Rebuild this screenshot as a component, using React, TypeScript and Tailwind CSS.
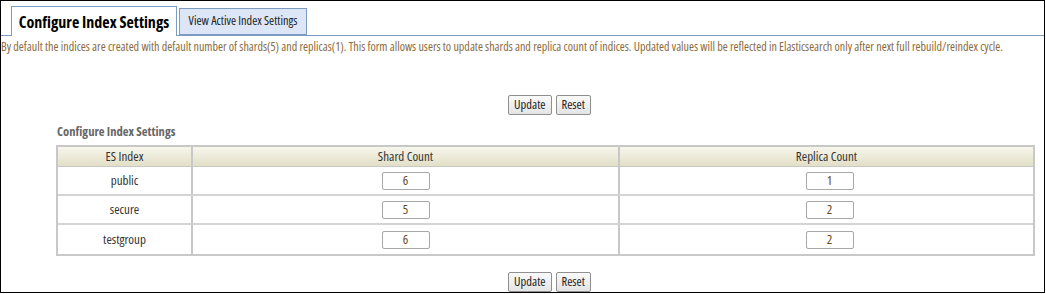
const rows = [
  { name: "public", shard: "6", replica: "1" },
  { name: "secure", shard: "5", replica: "2" },
  { name: "testgroup", shard: "6", replica: "2" },
];

function Buttons() {
  return (
    <div className="flex justify-center gap-[4px] pl-[54px]">
      <button className="h-[20px] px-[5px] border border-[#8f8f8f] rounded-[2px] bg-gradient-to-b from-[#fafafa] to-[#e4e4e4] text-[12.5px] text-[#222] leading-none">Update</button>
      <button className="h-[20px] px-[5px] border border-[#8f8f8f] rounded-[2px] bg-gradient-to-b from-[#fafafa] to-[#e4e4e4] text-[12.5px] text-[#222] leading-none">Reset</button>
    </div>
  );
}

function Cell({ value }: { value: string }) {
  return (
    <div className="flex items-center justify-center">
      <input
        defaultValue={value}
        className="w-[48px] h-[18px] border border-[#a8a8a8] rounded-[2px] text-center text-[13px] text-[#6b4a1e] bg-white outline-none"
      />
    </div>
  );
}

export default function App() {
  return (
    <div className="w-[1046px] h-[294px] bg-white font-['Open_Sans',sans-serif] [font-stretch:75%]">
      <div className="w-[1045px] h-[293px] border border-black flex flex-col">
        <div className="flex items-end pl-[10px] pt-[5px] border-b border-[#7d9ac2]">
          <div className="w-[166px] h-[30px] -mb-px bg-white border border-b-0 border-[#7d9ac2] flex items-center justify-center text-[16px] font-bold text-black">
            Configure Index Settings
          </div>
          <div className="ml-[2px] w-[128px] h-[27px] bg-[#dce6f6] border border-[#7d9ac2] flex items-center justify-center text-[12.3px] text-[#222]">
            View Active Index Settings
          </div>
        </div>
        <div className="pt-[3px] text-[12.07px] leading-[16px] text-[#8a6a3c] whitespace-nowrap">
          By default the indices are created with default number of shards(5) and replicas(1). This form allows users to update shards and replica count of indices. Updated values will be reflected in Elasticsearch only after next full rebuild/reindex cycle.
        </div>
        <div className="mt-[40px]">
          <Buttons />
        </div>
        <div className="mt-[9px] pl-[56px] text-[12.6px] font-bold text-[#666] leading-[16px]">Configure Index Settings</div>
        <div className="mt-[5px] ml-[55px] w-[979px] border-2 border-[#c8c8c8] text-[13px] text-[#333]">
          <div className="grid grid-cols-[135px_427px_1fr] h-[20px] bg-gradient-to-b from-[#f7f6ec] to-[#e2dfc6] border-b border-[#c8c8c8]">
            <div className="flex items-center justify-center border-r-2 border-[#c8c8c8]">ES Index</div>
            <div className="flex items-center justify-center border-r-2 border-[#c8c8c8]">Shard Count</div>
            <div className="flex items-center justify-center">Replica Count</div>
          </div>
          {rows.map((r, i) => (
            <div
              key={r.name}
              className={`grid grid-cols-[135px_427px_1fr] h-[29px] ${i < rows.length - 1 ? "border-b-2 border-[#d4d4d4]" : ""}`}
            >
              <div className="flex items-center justify-center border-r-2 border-[#c8c8c8]">{r.name}</div>
              <div className="border-r-2 border-[#c8c8c8] flex items-center justify-center">
                <Cell value={r.shard} />
              </div>
              <div className="flex items-center justify-center pl-[6px]">
                <Cell value={r.replica} />
              </div>
            </div>
          ))}
        </div>
        <div className="mt-[16px]">
          <Buttons />
        </div>
      </div>
    </div>
  );
}
